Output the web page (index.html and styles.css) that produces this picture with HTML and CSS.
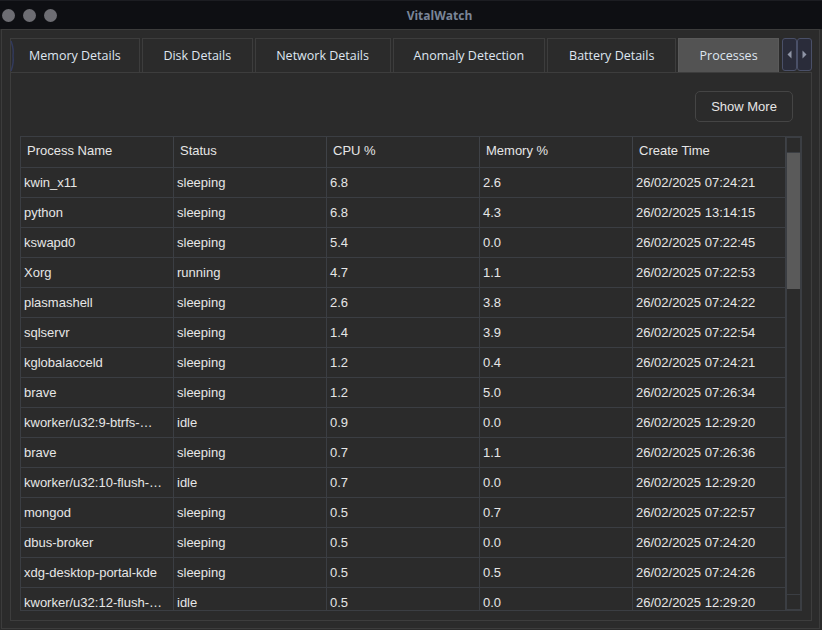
FILE: index.html
```html
<!DOCTYPE html>
<html>
<head>
<meta charset="utf-8">
<title>VitalWatch</title>
<link rel="stylesheet" href="styles.css">
</head>
<body>
<div class="titlebar">
  <div class="dots"><span class="dot"></span><span class="dot"></span><span class="dot"></span></div>
  <div class="title">VitalWatch</div>
</div>
<div class="window">
  <div class="tabbar">
    <svg class="tab-edge" width="5" height="32" viewBox="0 0 5 32"><path d="M1 1 Q4 9 3 16 Q4 23 1 31" fill="none" stroke="#323a5c" stroke-width="1.5"/></svg>
    <div class="tab w-mem">Memory Details</div>
    <div class="tab w-disk">Disk Details</div>
    <div class="tab w-net">Network Details</div>
    <div class="tab w-anom">Anomaly Detection</div>
    <div class="tab w-bat">Battery Details</div>
    <div class="tab w-proc selected">Processes</div>
    <div class="tab-scroll">
      <div class="arrow"><svg width="5" height="9" viewBox="0 0 5 9"><path d="M4.5 0.5 L0.5 4.5 L4.5 8.5 Z" fill="#8f95a6"/></svg></div>
      <div class="arrow"><svg width="5" height="9" viewBox="0 0 5 9"><path d="M0.5 0.5 L4.5 4.5 L0.5 8.5 Z" fill="#8f95a6"/></svg></div>
    </div>
  </div>
  <div class="pane">
    <div class="toolbar"><div class="btn">Show More</div></div>
    <div class="table">
      <div class="view">
        <div class="row head"><div class="cell">Process Name</div><div class="cell">Status</div><div class="cell">CPU %</div><div class="cell">Memory %</div><div class="cell">Create Time</div></div>
        <div class="row"><div class="cell">kwin_x11</div><div class="cell">sleeping</div><div class="cell">6.8</div><div class="cell">2.6</div><div class="cell">26/02/2025 07:24:21</div></div>
        <div class="row"><div class="cell">python</div><div class="cell">sleeping</div><div class="cell">6.8</div><div class="cell">4.3</div><div class="cell">26/02/2025 13:14:15</div></div>
        <div class="row"><div class="cell">kswapd0</div><div class="cell">sleeping</div><div class="cell">5.4</div><div class="cell">0.0</div><div class="cell">26/02/2025 07:22:45</div></div>
        <div class="row"><div class="cell">Xorg</div><div class="cell">running</div><div class="cell">4.7</div><div class="cell">1.1</div><div class="cell">26/02/2025 07:22:53</div></div>
        <div class="row"><div class="cell">plasmashell</div><div class="cell">sleeping</div><div class="cell">2.6</div><div class="cell">3.8</div><div class="cell">26/02/2025 07:24:22</div></div>
        <div class="row"><div class="cell">sqlservr</div><div class="cell">sleeping</div><div class="cell">1.4</div><div class="cell">3.9</div><div class="cell">26/02/2025 07:22:54</div></div>
        <div class="row"><div class="cell">kglobalacceld</div><div class="cell">sleeping</div><div class="cell">1.2</div><div class="cell">0.4</div><div class="cell">26/02/2025 07:24:21</div></div>
        <div class="row"><div class="cell">brave</div><div class="cell">sleeping</div><div class="cell">1.2</div><div class="cell">5.0</div><div class="cell">26/02/2025 07:26:34</div></div>
        <div class="row"><div class="cell">kworker/u32:9-btrfs-…</div><div class="cell">idle</div><div class="cell">0.9</div><div class="cell">0.0</div><div class="cell">26/02/2025 12:29:20</div></div>
        <div class="row"><div class="cell">brave</div><div class="cell">sleeping</div><div class="cell">0.7</div><div class="cell">1.1</div><div class="cell">26/02/2025 07:26:36</div></div>
        <div class="row"><div class="cell">kworker/u32:10-flush-…</div><div class="cell">idle</div><div class="cell">0.7</div><div class="cell">0.0</div><div class="cell">26/02/2025 12:29:20</div></div>
        <div class="row"><div class="cell">mongod</div><div class="cell">sleeping</div><div class="cell">0.5</div><div class="cell">0.7</div><div class="cell">26/02/2025 07:22:57</div></div>
        <div class="row"><div class="cell">dbus-broker</div><div class="cell">sleeping</div><div class="cell">0.5</div><div class="cell">0.0</div><div class="cell">26/02/2025 07:24:20</div></div>
        <div class="row"><div class="cell">xdg-desktop-portal-kde</div><div class="cell">sleeping</div><div class="cell">0.5</div><div class="cell">0.5</div><div class="cell">26/02/2025 07:24:26</div></div>
        <div class="row"><div class="cell">kworker/u32:12-flush-…</div><div class="cell">idle</div><div class="cell">0.5</div><div class="cell">0.0</div><div class="cell">26/02/2025 12:29:20</div></div>
      </div>
      <div class="vscroll">
        <div class="sb-cap"></div>
        <div class="sb-track"><div class="sb-thumb"></div></div>
        <div class="sb-cap"></div>
      </div>
    </div>
  </div>
</div>
</body>
</html>
```

FILE: styles.css
```css
* { box-sizing: border-box; }
html, body { margin: 0; padding: 0; }
body {
  width: 822px;
  height: 630px;
  overflow: hidden;
  background: #2b2b2b;
  display: flex;
  flex-direction: column;
  font-family: "Liberation Sans", Arial, sans-serif;
}
.titlebar {
  height: 29px;
  flex: 0 0 29px;
  background: #0e0f13;
  border-top: 1px solid #1c1d22;
  display: flex;
  align-items: center;
}
.dots {
  display: flex;
  gap: 8px;
  padding-left: 2px;
  width: 57px;
}
.dot {
  width: 13px;
  height: 13px;
  border-radius: 50%;
  background: #6d6d73;
}
.title {
  flex: 1;
  text-align: center;
  font-family: "Open Sans", "Noto Sans", sans-serif;
  font-weight: 700;
  font-size: 12px;
  color: #7a8598;
}
.window {
  flex: 1;
  min-height: 0;
  margin: 0 2px 1px 1px;
  border: 1px solid #3c3c3c;
  background: #2b2b2b;
  padding: 8px 7px 7px 8px;
  display: flex;
  flex-direction: column;
}
.tabbar {
  position: relative;
  display: flex;
  align-items: flex-end;
  gap: 2px;
  height: 34px;
  flex: 0 0 34px;
}
.tab-edge {
  position: absolute;
  left: 0;
  top: 2px;
}
.tab {
  height: 34px;
  border: 1px solid #3d3d3d;
  border-bottom: none;
  background: #2b2b2b;
  color: #dfe6f0;
  font-family: "Open Sans", "Noto Sans", sans-serif;
  font-size: 12.5px;
  display: flex;
  align-items: center;
  justify-content: center;
}
.tab.selected {
  background: #535353;
  border-color: #5a5a5a;
}
.w-mem { width: 130px; }
.w-disk { width: 111px; }
.w-net { width: 136px; }
.w-anom { width: 153px; }
.w-bat { width: 129px; }
.w-proc { width: 101px; }
.tab-scroll {
  display: flex;
  margin-left: 1px;
  margin-bottom: 1px;
}
.arrow {
  width: 15px;
  height: 33px;
  background: #2a2c3a;
  border: 1px solid #4a5068;
  border-radius: 3px;
  display: flex;
  align-items: center;
  justify-content: center;
}
.pane {
  flex: 1;
  min-height: 0;
  border: 1px solid #3d3d3d;
  padding: 9px;
  display: flex;
  flex-direction: column;
  width: 802px;
}
.toolbar {
  display: flex;
  justify-content: flex-end;
  padding: 9px 9px 0 0;
  margin-bottom: 14px;
}
.btn {
  width: 98px;
  height: 31px;
  border: 1px solid #454545;
  border-radius: 5px;
  background: #2b2b2b;
  color: #e6e6e6;
  font-size: 13px;
  display: flex;
  align-items: center;
  justify-content: center;
}
.table {
  flex: 1;
  min-height: 0;
  border: 1px solid #3b3e43;
  display: flex;
  overflow: hidden;
}
.view {
  width: 765px;
  overflow: hidden;
}
.row {
  display: grid;
  grid-template-columns: repeat(5, 153px);
  height: 30px;
}
.row.head {
  height: 31px;
}
.cell {
  border-right: 1px solid #3b3e43;
  border-bottom: 1px solid #3b3e43;
  color: #e6e6e6;
  font-size: 13px;
  line-height: 28px;
  padding-top: 1px;
  padding-left: 3px;
  white-space: nowrap;
  overflow: hidden;
}
.head .cell {
  padding-left: 6px;
  padding-top: 0;
  line-height: 27px;
  border-right-color: #3f4247;
}
.vscroll {
  width: 15px;
  display: flex;
  flex-direction: column;
}
.sb-cap {
  height: 16px;
  flex: 0 0 16px;
  border: 1px solid #3b3e43;
}
.sb-track {
  flex: 1;
  border-left: 1px solid #3b3e43;
  border-right: 1px solid #3b3e43;
}
.sb-thumb {
  height: 136px;
  background: #5a5a5a;
}
```
